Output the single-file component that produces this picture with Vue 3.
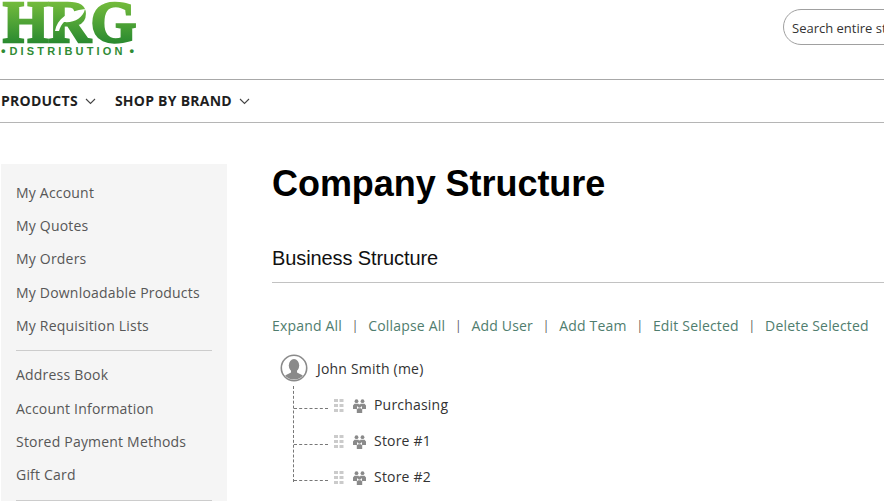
<script setup>
const tabs = ['Expand All', 'Collapse All', 'Add User', 'Add Team', 'Edit Selected', 'Delete Selected']
const groupOne = ['My Account', 'My Quotes', 'My Orders', 'My Downloadable Products', 'My Requisition Lists']
const groupTwo = ['Address Book', 'Account Information', 'Stored Payment Methods', 'Gift Card']
const teams = ['Purchasing', 'Store #1', 'Store #2']
</script>

<template>
  <div class="page">
    <header class="top">
      <div class="logo">
        <svg class="mark" width="137" height="45" viewBox="0 0 137 45">
          <defs>
            <linearGradient id="lg" gradientUnits="userSpaceOnUse" x1="0" y1="2" x2="0" y2="43">
              <stop offset="0" stop-color="#74bb3c"/>
              <stop offset="0.5" stop-color="#4fa336"/>
              <stop offset="1" stop-color="#2a8a30"/>
            </linearGradient>
          </defs>
          <text x="3" y="42" class="mark-text" fill="url(#lg)" stroke="url(#lg)">HRG</text>
          <path d="M55 31C57 19 68 11 85 9 83 18 74 23 64 22 62 24 60 27 59 31Z" fill="#fff"/>
        </svg>
        <div class="dist"><span>•</span><span>DISTRIBUTION</span><span>•</span></div>
      </div>
      <div class="search">Search entire store here...</div>
    </header>
    <nav class="nav">
      <span class="nav-item">PRODUCTS
        <svg width="11" height="7" viewBox="0 0 11 7"><path d="M1 1l4.500 4.500L10 1" fill="none" stroke="#444" stroke-width="1.100"/></svg>
      </span>
      <span class="nav-item">SHOP BY BRAND
        <svg width="11" height="7" viewBox="0 0 11 7"><path d="M1 1l4.500 4.500L10 1" fill="none" stroke="#444" stroke-width="1.100"/></svg>
      </span>
    </nav>
    <div class="body">
      <aside class="side">
        <ul class="group">
          <li v-for="g in groupOne" :key="g">{{ g }}</li>
        </ul>
        <div class="rule"></div>
        <ul class="group second">
          <li v-for="g in groupTwo" :key="g">{{ g }}</li>
        </ul>
        <div class="rule"></div>
      </aside>
      <main class="main">
        <h1>Company Structure</h1>
        <h2>Business Structure</h2>
        <div class="actions">
          <template v-for="(t, i) in tabs" :key="t">
            <span v-if="i" class="sep">|</span>
            <a>{{ t }}</a>
          </template>
        </div>
        <div class="tree">
          <div class="root">
            <svg class="avatar" width="28" height="28" viewBox="0 0 28 28">
              <defs><clipPath id="c"><circle cx="14" cy="14" r="11.500"/></clipPath></defs>
              <circle cx="14" cy="14" r="12.700" fill="#fff" stroke="#8a8a8a" stroke-width="1.600"/>
              <g clip-path="url(#c)" fill="#8a8a8a">
                <ellipse cx="14" cy="11.500" rx="5.200" ry="6.500"/>
                <path d="M11 16h6v2.500l6 3V28H5v-6.500l6-3Z"/>
              </g>
            </svg>
            <span>John Smith (me)</span>
          </div>
          <div class="kids">
            <div v-for="t in teams" :key="t" class="kid">
              <span class="dash"></span>
              <svg class="grip" width="10" height="13" viewBox="0 0 10 13" fill="#cbcbcb">
                <rect x="0" y="0" width="4" height="3"/><rect x="5.500" y="0" width="4" height="3"/>
                <rect x="0" y="5" width="4" height="3"/><rect x="5.500" y="5" width="4" height="3"/>
                <rect x="0" y="10" width="4" height="3"/><rect x="5.500" y="10" width="4" height="3"/>
              </svg>
              <svg class="team" width="15" height="14" viewBox="0 0 15 14" fill="#8a8a8a">
                <circle cx="4.500" cy="2.200" r="1.900"/><circle cx="10.500" cy="2.200" r="1.900"/>
                <path d="M1 10V6.500L2.500 4.800h4L7 5.500 5 8v2ZM14 10V6.500L12.500 4.800h-4L8 5.500 10 8v2Z"/>
                <circle cx="7.500" cy="7" r="1.800"/>
                <path d="M4.800 14v-3.500L6 9.300h3l1.200 1.200V14Z"/>
              </svg>
              <span class="kid-name">{{ t }}</span>
            </div>
          </div>
        </div>
      </main>
    </div>
  </div>
</template>

<style>
html, body { margin: 0; overflow: hidden; background: #fff; }
</style>

<style scoped>
.page { width: 884px; height: 501px; overflow: hidden; font-family: "Open Sans", "Noto Sans", sans-serif; color: #333; }
.top { height: 79px; display: flex; align-items: flex-start; border-bottom: 1px solid #a8a8a8; }
.logo { width: 137px; flex: none; }
.mark { display: block; }
.mark-text { font: 700 58.5px "Liberation Serif", serif; stroke-width: 2.6px; }
.dist { display: flex; justify-content: space-between; align-items: center; width: 133px; margin: 0 0 0 1px; font: 700 11px/12px "Liberation Sans", sans-serif; letter-spacing: 3.15px; color: #2f8c35; white-space: nowrap; }
.dist span:first-child, .dist span:last-child { letter-spacing: 0; font-size: 13px; }
.search { margin-left: 646px; margin-top: 9px; flex: none; width: 300px; height: 34px; line-height: 36px; border: 1px solid #a0a0a0; border-radius: 18px; padding-left: 8px; font-size: 13px; color: #333; white-space: nowrap; }
.nav { height: 42px; display: flex; align-items: center; gap: 19px; padding-left: 1px; border-bottom: 1px solid #b5b5b5; }
.nav-item { font-size: 14px; font-weight: 700; line-height: 40px; color: #1f1f1f; letter-spacing: 0.25px; display: flex; align-items: center; gap: 7px; white-space: nowrap; }
.body { display: flex; margin-top: 41px; padding-left: 1px; }
.side { width: 226px; flex: none; background: #f5f5f5; height: 340px; box-sizing: border-box; padding: 11.7px 15px 0; }
.group { list-style: none; margin: 0; padding: 0; }
.group li { height: 33.3px; line-height: 33.3px; font-size: 14px; letter-spacing: 0.2px; color: #575757; white-space: nowrap; }
.rule { height: 1px; background: #ccc; margin: 8px 0 7px; }
.second { margin-top: 7.2px; }
.main { margin-left: 45px; flex: none; width: 640px; }
h1 { font: 700 36px/40px "Liberation Sans", Arial, sans-serif; letter-spacing: -0.05px; color: #000; margin: 0; }
h2 { font: 400 20px/26px "Liberation Sans", Arial, sans-serif; letter-spacing: -0.1px; color: #111; margin: 41px 0 0; padding-bottom: 11px; border-bottom: 1px solid #c2c2c2; }
.actions { margin-top: 32px; height: 20px; display: flex; align-items: center; font-size: 14px; letter-spacing: 0.18px; color: #4f7d6e; white-space: nowrap; }
.sep { color: #555; font-size: 12px; margin: 0 9.75px; }
.tree { margin-top: 18px; font-size: 14px; letter-spacing: 0.2px; color: #333; }
.root { display: flex; align-items: center; gap: 9px; height: 30px; margin-left: 8px; }
.avatar { flex: none; }
.kids { margin-left: 21px; margin-top: 3px; border-left: 1px dashed #777; height: 96px; }
.kid { height: 36px; display: flex; align-items: center; }
.dash { width: 34px; border-top: 1px dashed #777; margin-right: 6px; margin-top: 9px; flex: none; }
.grip { flex: none; margin-right: 8px; margin-top: 3px; }
.team { flex: none; margin-right: 7px; margin-top: 3px; }
</style>
